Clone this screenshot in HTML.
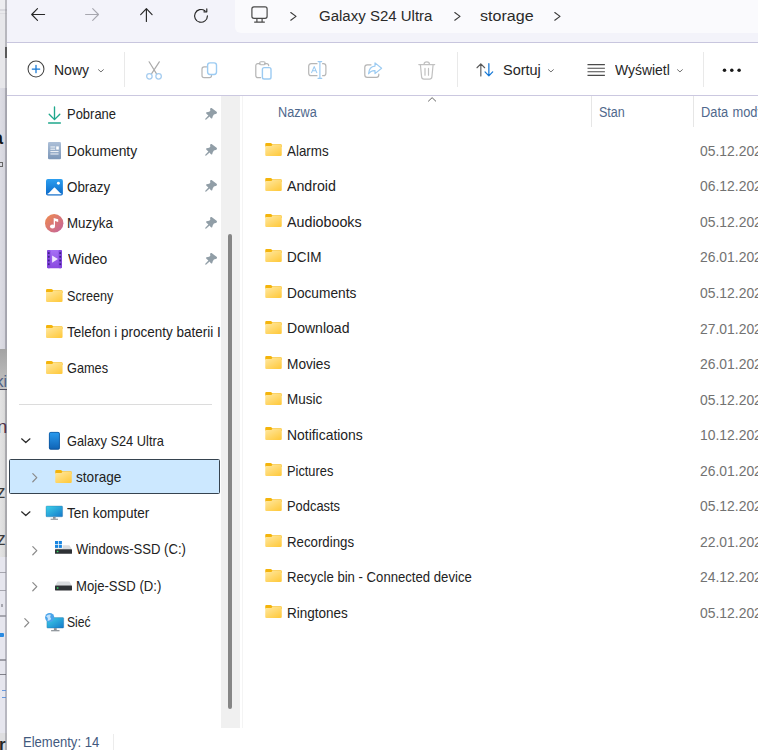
<!DOCTYPE html>
<html lang="pl"><head><meta charset="utf-8"><title>storage</title>
<style>
html,body{margin:0;padding:0}
body{width:758px;height:750px;overflow:hidden;background:#fff;position:relative;font-family:"Liberation Sans",sans-serif}
.ic{position:absolute;overflow:visible;display:block}
.t{position:absolute;white-space:nowrap;line-height:1;transform-origin:0 0;display:block}
.strip{position:absolute;left:0;top:0;width:6.6px;height:750px;overflow:hidden;background:#e6e6e9}
.strip i{position:absolute;left:0;width:6.6px;display:block}
.strip b{position:absolute;display:block}
.strip u{position:absolute;display:block;text-decoration:none;line-height:1;white-space:nowrap}
.strip .edge{left:4.8px;width:1.8px;background:rgba(112,112,122,.4)}
.topbar{position:absolute;left:6.6px;top:0;width:752px;height:42px;background:#f3f3fa}
.topbar>*,.toolbar>*,.sidebar>*,.list>*,.row>*,.status>*{margin-left:-6.6px}
.addr{position:absolute;left:235.2px;top:-6px;width:540px;height:39.2px;border-radius:6px;background:#fafafd}
.toolbar{position:absolute;left:6.6px;top:41.8px;width:752px;height:53.9px;background:#fff;border-top:1.4px solid #c8c6de;border-bottom:1.5px solid #cbc8e0;box-sizing:border-box}
.toolbar>*{margin-top:-43.2px}
.vsep{position:absolute;top:52.5px;width:1px;height:34.5px;background:#e9e9e9;display:block}
.sidebar{position:absolute;left:6.6px;top:95.6px;width:233.4px;height:632.4px;background:#fff}
.sidebar>*{margin-top:-95.6px}
.hsep{position:absolute;height:1.1px;background:#dcdcdc;display:block}
.sel{position:absolute;left:9.1px;top:459.2px;width:210.7px;height:35.3px;box-sizing:border-box;background:#cce8ff;border:1.2px solid #36434f;border-radius:1.5px}
.track{position:absolute;left:221.1px;top:95.6px;width:18.9px;height:632.4px;background:#f0f0f0}
.thumb{position:absolute;left:7.3px;top:138.6px;width:4px;height:474.4px;border-radius:2px;background:#868686;display:block}
.list{position:absolute;left:240px;top:95.6px;width:518px;height:640px;background:#fff;overflow:hidden}
.list>*,.row>*{margin-left:-240px;margin-top:-95.6px}
.row{position:absolute;left:0;top:0;width:518px;height:0;margin:0 !important}
.panel-line{position:absolute;left:242px;top:95.6px;width:1px;height:632.4px;background:#f4f4f4;display:block}
.colsep{position:absolute;top:95.6px;width:1px;height:31.4px;background:#e6e6e6;display:block}
.status{position:absolute;left:6.6px;top:728px;width:752px;height:22px;background:#fff}
.status>*{margin-top:-728px}
.stsep{position:absolute;left:112.6px;top:734px;width:1px;height:16px;background:#ececec;display:block}
</style></head>
<body>
<svg width="0" height="0" style="position:absolute"><defs>
<linearGradient id="fg" x1="0" y1="0" x2="0.75" y2="1"><stop offset="0" stop-color="#ffe9a4"/><stop offset="1" stop-color="#ffcb42"/></linearGradient>
<linearGradient id="mg" x1="0" y1="0" x2="1" y2="1"><stop offset="0" stop-color="#f08c4c"/><stop offset="1" stop-color="#c2629f"/></linearGradient>
<linearGradient id="pg" x1="0" y1="0" x2="0" y2="1"><stop offset="0" stop-color="#2a9cf0"/><stop offset="1" stop-color="#0f62b4"/></linearGradient>
<linearGradient id="dg" x1="0" y1="0" x2="0" y2="1"><stop offset="0" stop-color="#adc0d8"/><stop offset="1" stop-color="#7b96b8"/></linearGradient>
<linearGradient id="og" x1="0" y1="0" x2="0" y2="1"><stop offset="0" stop-color="#2c9ff0"/><stop offset="1" stop-color="#0a68c8"/></linearGradient>
<linearGradient id="sg" x1="0" y1="0" x2="1" y2="1"><stop offset="0" stop-color="#3fd2ea"/><stop offset="1" stop-color="#1478c9"/></linearGradient>
<linearGradient id="vg" x1="0" y1="0" x2="0" y2="1"><stop offset="0" stop-color="#a670f5"/><stop offset="1" stop-color="#8a4ae0"/></linearGradient>
</defs></svg>
<div class="strip"><i style="top:0;height:9px;background:#ededf0"></i><i style="top:9px;height:1.5px;background:#d9d9de"></i><i style="top:10.5px;height:2.5px;background:#e9e9ec"></i><i style="top:13px;height:1px;background:#dcdce0"></i><i style="top:14px;height:74px;background:#e7e7ea"></i><i style="top:88px;height:261px;background:linear-gradient(90deg,#dddde4 0,#d6d6de 60%,#c4c4cc 100%)"></i><i style="top:349px;height:40.6px;background:linear-gradient(#a3a3a3,#c4c4c4)"></i><i style="top:389.6px;height:167px;background:linear-gradient(90deg,#e3e3e3 0,#dcdcdc 55%,#c8c8c8 100%)"></i><i style="top:556.6px;height:176px;background:#e6e6ee"></i><i style="top:732.6px;height:18px;background:#dedee0"></i><i class="edge" style="top:0;height:349px"></i><i class="edge" style="top:389.6px;height:361px"></i><b style="left:4.9px;top:47.3px;width:1.8px;height:10.8px;background:#5a5a5a"></b><u style="right:3.6px;top:128.3px;font-size:19px;font-weight:bold;color:#151515">a</u><b style="left:-2px;top:162px;width:4.6px;height:4.8px;box-sizing:border-box;border:1px solid #666"></b><u style="right:-0.4px;top:374.3px;font-size:16px;color:#4f5f84">ki</u><b style="left:0;top:388.6px;width:6.6px;height:1.1px;background:#4e4e5e"></b><u style="right:-0.6px;top:418.4px;font-size:18.5px;color:#4a3048">n</u><u style="right:1.2px;top:483px;font-size:18px;color:#3c3c3c">z</u><u style="right:0.8px;top:529.6px;font-size:18px;color:#3c3c3c">z</u><b style="left:0;top:571.5px;width:6px;height:1.6px;background:#8a8a94;opacity:.7"></b><b style="left:0;top:589.5px;width:6px;height:1.6px;background:#8a8a94;opacity:.7"></b><b style="left:0.6px;top:603.5px;width:2.2px;height:3.6px;background:#8a8a94;opacity:.7"></b><b style="left:0;top:615px;width:6px;height:1.5px;background:#8a8a94;opacity:.7"></b><b style="left:0;top:633px;width:4px;height:4px;background:#2b8be2;border-radius:0 1px 1px 0"></b><b style="left:0;top:659px;width:6px;height:1.5px;background:#7e7e88;opacity:.7"></b><b style="left:0;top:673.5px;width:6px;height:1.6px;background:#55555f;opacity:.7"></b><b style="left:2px;top:689.5px;width:4px;height:1.4px;background:#4a86d8;opacity:.8"></b><b style="left:2px;top:696.5px;width:4px;height:1.4px;background:#4a86d8;opacity:.8"></b><u style="right:1px;top:735.5px;font-size:17px;font-weight:bold;color:#262626">r</u></div>
<div class="topbar"><div class="addr"></div>
<svg class="ic" style="left:31px;top:8.1px" width="14.2" height="13" viewBox="0 0 14.2 13" ><path d="M13.6 6.5H0.9M6.5 0.7L0.7 6.5L6.5 12.3" fill="none" stroke-linecap="round" stroke-linejoin="round" stroke="#262626" stroke-width="1.15"/></svg>
<svg class="ic" style="left:85.2px;top:8.1px" width="14.2" height="13" viewBox="0 0 14.2 13" ><path d="M0.6 6.5H13.3M7.7 0.7L13.5 6.5L7.7 12.3" fill="none" stroke-linecap="round" stroke-linejoin="round" stroke="#a7a7af" stroke-width="1.15"/></svg>
<svg class="ic" style="left:140px;top:7.8px" width="12.8" height="14" viewBox="0 0 12.8 14" ><path d="M6.4 13.4V0.9M0.7 6.6L6.4 0.7L12.1 6.6" fill="none" stroke-linecap="round" stroke-linejoin="round" stroke="#262626" stroke-width="1.15"/></svg>
<svg class="ic" style="left:193px;top:7.5px" width="16" height="16" viewBox="0 0 16 16" ><path d="M14.4 7.9A6.4 6.4 0 1 1 11.9 2.8" fill="none" stroke-linecap="round" stroke-linejoin="round" stroke="#262626" stroke-width="1.15"/><path d="M9.7 3.2H12.6V0.3" fill="none" stroke-linecap="round" stroke-linejoin="round" stroke="#262626" stroke-width="1.15" transform="translate(1.2,0.6)"/></svg>
<svg class="ic" style="left:251px;top:6px" width="17" height="17" viewBox="0 0 17 17" ><rect x="0.9" y="0.9" width="15.2" height="11.4" rx="2" fill="none" stroke-linecap="round" stroke-linejoin="round" stroke="#4a4a4a" stroke-width="1.2"/><path d="M5.9 12.5V15.9M11.1 12.5V15.9M3.6 16.1H13.4" fill="none" stroke-linecap="round" stroke-linejoin="round" stroke="#4a4a4a" stroke-width="1.2"/></svg>
<svg class="ic" style="left:290.3px;top:11.8px" width="6.8" height="8.8" viewBox="0 0 6.8 8.8" ><path d="M0.77 0.57L6.02 4.40L0.77 8.23" fill="none" stroke="#3a3a3a" stroke-width="1.15" stroke-linecap="round" stroke-linejoin="round"/></svg>
<span class="t" style="left:319.00px;top:7.76px;font-size:15.4px;color:#2a2a2a;transform:scaleX(0.9751)">Galaxy S24 Ultra</span>
<svg class="ic" style="left:453.8px;top:11.8px" width="6.8" height="8.8" viewBox="0 0 6.8 8.8" ><path d="M0.77 0.57L6.02 4.40L0.77 8.23" fill="none" stroke="#3a3a3a" stroke-width="1.15" stroke-linecap="round" stroke-linejoin="round"/></svg>
<span class="t" style="left:480.05px;top:7.76px;font-size:15.4px;color:#2a2a2a;transform:scaleX(1.0435)">storage</span>
<svg class="ic" style="left:554.4px;top:11.8px" width="6.8" height="8.8" viewBox="0 0 6.8 8.8" ><path d="M0.77 0.57L6.02 4.40L0.77 8.23" fill="none" stroke="#3a3a3a" stroke-width="1.15" stroke-linecap="round" stroke-linejoin="round"/></svg>
</div>
<div class="toolbar">
<svg class="ic" style="left:26.55px;top:60.8px" width="18" height="18" viewBox="0 0 18 18" ><circle cx="9" cy="9" r="7.95" fill="none" stroke-linecap="round" stroke-linejoin="round" stroke="#444" stroke-width="1.05"/><path d="M9 5.3V12.7M5.3 9H12.7" fill="none" stroke-linecap="round" stroke-linejoin="round" stroke="#1377d6" stroke-width="1.25"/></svg>
<span class="t" style="left:54.41px;top:63.65px;font-size:14.0px;color:#262626;transform:scaleX(0.9996)">Nowy</span>
<svg class="ic" style="left:98px;top:69.4px" width="5.9" height="3.6" viewBox="0 0 5.9 3.6" ><path d="M0.50 0.70L2.95 2.90L5.40 0.70" fill="none" stroke="#6e6e6e" stroke-width="1" stroke-linecap="round" stroke-linejoin="round"/></svg>
<i class="vsep" style="left:123.7px"></i>
<svg class="ic" style="left:145px;top:61px" width="18" height="19" viewBox="0 0 18 19" ><path d="M4.1 0.8L11.7 13.1M14.3 0.8L6.3 13.1" fill="none" stroke-linecap="round" stroke-linejoin="round" stroke="#ababab" stroke-width="1.2"/><circle cx="4.4" cy="15.3" r="2.75" fill="none" stroke-linecap="round" stroke-linejoin="round" stroke="#a6cdf0" stroke-width="1.3"/><circle cx="13.6" cy="15.3" r="2.75" fill="none" stroke-linecap="round" stroke-linejoin="round" stroke="#a6cdf0" stroke-width="1.3"/></svg>
<svg class="ic" style="left:200.5px;top:62px" width="17" height="17" viewBox="0 0 17 17" ><path d="M5.6 4.8H3.1Q1 4.8 1 6.9V13.6Q1 15.7 3.1 15.7H8.4Q10.5 15.7 10.5 13.6V13.3" fill="none" stroke-linecap="round" stroke-linejoin="round" stroke="#b4b4b4" stroke-width="1.2"/><rect x="6.6" y="0.9" width="8.9" height="11.6" rx="2.4" fill="none" stroke-linecap="round" stroke-linejoin="round" stroke="#9ccbf2" stroke-width="1.4"/></svg>
<svg class="ic" style="left:255px;top:61px" width="17" height="19" viewBox="0 0 17 19" ><path d="M5 2.6H3Q0.8 2.6 0.8 4.8V14.4Q0.8 16.6 3 16.6H5.6M9.6 2.6H11.6Q13.6 2.6 13.7 4.6" fill="none" stroke-linecap="round" stroke-linejoin="round" stroke="#b4b4b4" stroke-width="1.2"/><rect x="4.6" y="0.8" width="5.6" height="3" rx="1.4" fill="none" stroke-linecap="round" stroke-linejoin="round" stroke="#b4b4b4" stroke-width="1.1"/><rect x="7.4" y="6.6" width="8.6" height="11.4" rx="1.8" fill="none" stroke-linecap="round" stroke-linejoin="round" stroke="#9ccbf2" stroke-width="1.4"/></svg>
<svg class="ic" style="left:308.4px;top:61.2px" width="18.6" height="18" viewBox="0 0 18.6 18" ><path d="M9 2.7H3.2Q0.7 2.7 0.7 5.2V12.2Q0.7 14.7 3.2 14.7H9M14.6 2.7H15.4Q17.9 2.7 17.9 5.2V12.2Q17.9 14.7 15.4 14.7H14.6" fill="none" stroke-linecap="round" stroke-linejoin="round" stroke="#b6b6b6" stroke-width="1.2"/><path d="M3.6 11.6L6.2 5.6L8.8 11.6M4.5 9.7H7.9" fill="none" stroke-linecap="round" stroke-linejoin="round" stroke="#9ccbf2" stroke-width="1.1"/><path d="M11.9 0.7V17.3M10.1 0.6H13.7M10.1 17.4H13.7" fill="none" stroke-linecap="round" stroke-linejoin="round" stroke="#9ccbf2" stroke-width="1.2"/></svg>
<svg class="ic" style="left:363.5px;top:62px" width="18.5" height="17" viewBox="0 0 18.5 17" ><path d="M7 2.8H3.2Q0.8 2.8 0.8 5.2V13Q0.8 15.4 3.2 15.4H12.4Q14.8 15.4 14.8 13V12.2" fill="none" stroke-linecap="round" stroke-linejoin="round" stroke="#b4b4b4" stroke-width="1.2"/><path d="M11 0.9L17.6 6.2L11 11.6V8.6Q6.6 8.4 4.6 11.8Q5 4.6 11 4.1Z" fill="none" stroke-linecap="round" stroke-linejoin="round" stroke="#9ccbf2" stroke-width="1.2"/></svg>
<svg class="ic" style="left:418px;top:61px" width="17.5" height="19" viewBox="0 0 17.5 19" ><path d="M0.8 3.6H16.7M6 3.4Q6 0.8 8.75 0.8Q11.5 0.8 11.5 3.4M2.4 3.8L3.6 15.9Q3.8 18.1 6 18.1H11.5Q13.7 18.1 13.9 15.9L15.1 3.8M7 7.4V14.2M10.5 7.4V14.2" fill="none" stroke-linecap="round" stroke-linejoin="round" stroke="#c1c1c1" stroke-width="1.2"/></svg>
<i class="vsep" style="left:456.6px"></i>
<svg class="ic" style="left:475.5px;top:63.3px" width="18.8" height="13.7" viewBox="0 0 20 15" ><path d="M5 14.2V1M0.8 5.2L5 0.9L9.2 5.2" fill="none" stroke-linecap="round" stroke-linejoin="round" stroke="#5a5a5a" stroke-width="1.25"/><path d="M13.8 0.8V14M9.6 9.8L13.8 14.1L18 9.8" fill="none" stroke-linecap="round" stroke-linejoin="round" stroke="#1377d6" stroke-width="1.35"/></svg>
<span class="t" style="left:503.05px;top:63.65px;font-size:14.0px;color:#262626;transform:scaleX(1.0337)">Sortuj</span>
<svg class="ic" style="left:547.9px;top:69.4px" width="5.9" height="3.6" viewBox="0 0 5.9 3.6" ><path d="M0.50 0.70L2.95 2.90L5.40 0.70" fill="none" stroke="#6e6e6e" stroke-width="1" stroke-linecap="round" stroke-linejoin="round"/></svg>
<svg class="ic" style="left:587px;top:64px" width="18.4" height="12" viewBox="0 0 18.4 12" ><path d="M0.5 0.6H17.9M0.5 4.2H17.9M0.5 7.8H17.9M0.5 11.4H17.9" stroke="#4a4a4a" stroke-width="1.05"/></svg>
<span class="t" style="left:614.70px;top:63.65px;font-size:14.0px;color:#262626;transform:scaleX(0.9949)">Wyświetl</span>
<svg class="ic" style="left:677px;top:69.4px" width="5.9" height="3.6" viewBox="0 0 5.9 3.6" ><path d="M0.50 0.70L2.95 2.90L5.40 0.70" fill="none" stroke="#6e6e6e" stroke-width="1" stroke-linecap="round" stroke-linejoin="round"/></svg>
<i class="vsep" style="left:703.1px"></i>
<svg class="ic" style="left:722px;top:68.5px" width="19.5" height="4.5" viewBox="0 0 19.5 4.5" ><circle cx="2.5" cy="2.2" r="1.75" fill="#1a1a1a"/><circle cx="9.8" cy="2.2" r="1.75" fill="#1a1a1a"/><circle cx="17.1" cy="2.2" r="1.75" fill="#1a1a1a"/></svg>
</div>
<div class="sidebar">
<svg class="ic" style="left:48px;top:105.5px" width="13" height="18" viewBox="0 0 13 18" ><path d="M6.5 1V13.4M1.2 8.2L6.5 13.6L11.8 8.2" fill="none" stroke-linecap="round" stroke-linejoin="round" stroke="#1fa88c" stroke-width="1.35"/><path d="M0.6 17H12.4" fill="none" stroke-linecap="round" stroke-linejoin="round" stroke="#1fa88c" stroke-width="1.35"/></svg>
<span class="t" style="left:67.49px;top:107.26px;font-size:14.4px;color:#222222;transform:scaleX(0.9007)">Pobrane</span>
<svg class="ic" style="left:204.9px;top:107.9px" width="12" height="12" viewBox="0 0 12 12" ><path d="M6.6 0.1L11.6 3.8Q12.6 5 11.4 5.8L8.9 6.5L7.8 8.2L7.2 10.2Q6.4 10.9 5.6 10.1L4.6 8.4L1.3 11.5Q0.3 12 0.1 11L3.4 7.4L1.4 5.7Q0.6 4.8 1.6 4.3L4.2 3.8L5.3 2.8L5.1 1.1Q5.3 -0.3 6.6 0.1Z" fill="#919ea7"/></svg>
<svg class="ic" style="left:48px;top:142px" width="13" height="17.3" viewBox="0 0 13 17.3" ><rect x="0" y="0" width="13" height="17.3" rx="1.3" fill="url(#dg)"/><path d="M2.4 5H7.2M2.4 7.2H7.2M2.4 9.6H10.6M2.4 12H10.6" stroke="#fff" stroke-width="0.9"/><rect x="8.2" y="4.4" width="2.6" height="3.2" fill="#fff"/></svg>
<span class="t" style="left:67.32px;top:143.51px;font-size:14.4px;color:#222222;transform:scaleX(0.9637)">Dokumenty</span>
<svg class="ic" style="left:204.9px;top:144.2px" width="12" height="12" viewBox="0 0 12 12" ><path d="M6.6 0.1L11.6 3.8Q12.6 5 11.4 5.8L8.9 6.5L7.8 8.2L7.2 10.2Q6.4 10.9 5.6 10.1L4.6 8.4L1.3 11.5Q0.3 12 0.1 11L3.4 7.4L1.4 5.7Q0.6 4.8 1.6 4.3L4.2 3.8L5.3 2.8L5.1 1.1Q5.3 -0.3 6.6 0.1Z" fill="#919ea7"/></svg>
<svg class="ic" style="left:46.1px;top:178.5px" width="16.9" height="16.4" viewBox="0 0 16.9 16.4" ><rect x="0" y="0" width="16.9" height="16.4" rx="1.9" fill="url(#og)"/><path d="M1.9 14.9L8.2 8.6Q8.5 8.3 8.8 8.6L15.1 14.9Z" fill="#fff"/><path d="M1.9 14.9H15.1" stroke="#fff" stroke-width="0.8" stroke-linecap="round"/><circle cx="12.4" cy="4.2" r="1.45" fill="#fff"/></svg>
<span class="t" style="left:67.17px;top:179.76px;font-size:14.4px;color:#222222;transform:scaleX(0.9292)">Obrazy</span>
<svg class="ic" style="left:204.9px;top:180.4px" width="12" height="12" viewBox="0 0 12 12" ><path d="M6.6 0.1L11.6 3.8Q12.6 5 11.4 5.8L8.9 6.5L7.8 8.2L7.2 10.2Q6.4 10.9 5.6 10.1L4.6 8.4L1.3 11.5Q0.3 12 0.1 11L3.4 7.4L1.4 5.7Q0.6 4.8 1.6 4.3L4.2 3.8L5.3 2.8L5.1 1.1Q5.3 -0.3 6.6 0.1Z" fill="#919ea7"/></svg>
<svg class="ic" style="left:45.3px;top:213.7px" width="18.4" height="18.4" viewBox="0 0 18.4 18.4" ><circle cx="9.2" cy="9.2" r="9.2" fill="url(#mg)"/><ellipse cx="7.5" cy="12.5" rx="2.5" ry="2.1" fill="#fff"/><path d="M8.7 12.5V4L13.2 5.3V8L10 7.1V12.5Z" fill="#fff"/></svg>
<span class="t" style="left:67.36px;top:216.01px;font-size:14.4px;color:#222222;transform:scaleX(0.9243)">Muzyka</span>
<svg class="ic" style="left:204.9px;top:216.7px" width="12" height="12" viewBox="0 0 12 12" ><path d="M6.6 0.1L11.6 3.8Q12.6 5 11.4 5.8L8.9 6.5L7.8 8.2L7.2 10.2Q6.4 10.9 5.6 10.1L4.6 8.4L1.3 11.5Q0.3 12 0.1 11L3.4 7.4L1.4 5.7Q0.6 4.8 1.6 4.3L4.2 3.8L5.3 2.8L5.1 1.1Q5.3 -0.3 6.6 0.1Z" fill="#919ea7"/></svg>
<svg class="ic" style="left:47px;top:250.2px" width="15" height="18.2" viewBox="0 0 15 18.2" ><rect x="0" y="0" width="15" height="18.2" rx="1.5" fill="url(#vg)"/><rect x="0" y="0" width="3.4" height="18.2" rx="1.2" fill="#8547de"/><rect x="11.6" y="0" width="3.4" height="18.2" rx="1.2" fill="#8547de"/><g fill="#3d2286"><rect x="0.9" y="2.2" width="1.7" height="1.8"/><rect x="0.9" y="5.9" width="1.7" height="1.8"/><rect x="0.9" y="9.6" width="1.7" height="1.8"/><rect x="0.9" y="13.3" width="1.7" height="1.8"/><rect x="12.4" y="2.2" width="1.7" height="1.8"/><rect x="12.4" y="5.9" width="1.7" height="1.8"/><rect x="12.4" y="9.6" width="1.7" height="1.8"/><rect x="12.4" y="13.3" width="1.7" height="1.8"/></g><path d="M5.1 5.5L10.9 9.1L5.1 12.7Z" fill="#f1e6ff"/></svg>
<span class="t" style="left:67.70px;top:252.26px;font-size:14.4px;color:#222222;transform:scaleX(0.9644)">Wideo</span>
<svg class="ic" style="left:204.9px;top:252.9px" width="12" height="12" viewBox="0 0 12 12" ><path d="M6.6 0.1L11.6 3.8Q12.6 5 11.4 5.8L8.9 6.5L7.8 8.2L7.2 10.2Q6.4 10.9 5.6 10.1L4.6 8.4L1.3 11.5Q0.3 12 0.1 11L3.4 7.4L1.4 5.7Q0.6 4.8 1.6 4.3L4.2 3.8L5.3 2.8L5.1 1.1Q5.3 -0.3 6.6 0.1Z" fill="#919ea7"/></svg>
<svg class="ic" style="left:46.2px;top:288.8px" width="16.6" height="13" viewBox="0 0 16.5 13" ><path d="M0 1.1Q0 0 1.1 0H5.4Q6 0 6.4 0.5L7 1.3H15.4Q16.5 1.3 16.5 2.4V4H0Z" fill="#f4b40b"/><path d="M0 3H5.6Q6.2 3 6.6 2.5L7.4 1.5H15.4Q16.5 1.5 16.5 2.6V11.9Q16.5 13 15.4 13H1.1Q0 13 0 11.9Z" fill="url(#fg)"/></svg>
<span class="t" style="left:67.01px;top:288.51px;font-size:14.4px;color:#222222;transform:scaleX(0.8764)">Screeny</span>
<svg class="ic" style="left:46.2px;top:325px" width="16.6" height="13" viewBox="0 0 16.5 13" ><path d="M0 1.1Q0 0 1.1 0H5.4Q6 0 6.4 0.5L7 1.3H15.4Q16.5 1.3 16.5 2.4V4H0Z" fill="#f4b40b"/><path d="M0 3H5.6Q6.2 3 6.6 2.5L7.4 1.5H15.4Q16.5 1.5 16.5 2.6V11.9Q16.5 13 15.4 13H1.1Q0 13 0 11.9Z" fill="url(#fg)"/></svg>
<span class="t" style="left:67.29px;top:324.76px;font-size:14.4px;color:#222222;transform:scaleX(0.9375)">Telefon i procenty baterii I</span>
<svg class="ic" style="left:46.2px;top:361.3px" width="16.6" height="13" viewBox="0 0 16.5 13" ><path d="M0 1.1Q0 0 1.1 0H5.4Q6 0 6.4 0.5L7 1.3H15.4Q16.5 1.3 16.5 2.4V4H0Z" fill="#f4b40b"/><path d="M0 3H5.6Q6.2 3 6.6 2.5L7.4 1.5H15.4Q16.5 1.5 16.5 2.6V11.9Q16.5 13 15.4 13H1.1Q0 13 0 11.9Z" fill="url(#fg)"/></svg>
<span class="t" style="left:67.40px;top:361.01px;font-size:14.4px;color:#222222;transform:scaleX(0.8854)">Games</span>
<i class="hsep" style="left:18.5px;top:404px;width:193.5px"></i>
<svg class="ic" style="left:21.3px;top:438.2px" width="9.6" height="5.4" viewBox="0 0 9.6 5.4" ><path d="M0.62 0.82L4.80 4.58L8.97 0.82" fill="none" stroke="#2a2a2a" stroke-width="1.25" stroke-linecap="round" stroke-linejoin="round"/></svg>
<svg class="ic" style="left:49.2px;top:432.2px" width="10.8" height="17.6" viewBox="0 0 10.8 17.6" ><rect x="0" y="0" width="10.8" height="17.6" rx="1.7" fill="url(#pg)"/><rect x="0.35" y="0.35" width="10.1" height="16.9" rx="1.5" fill="none" stroke="#0d4f94" stroke-width="0.7"/></svg>
<span class="t" style="left:66.90px;top:433.51px;font-size:14.4px;color:#222222;transform:scaleX(0.8904)">Galaxy S24 Ultra</span>
<div class="sel"></div>
<svg class="ic" style="left:32.3px;top:473px" width="5.6" height="9.4" viewBox="0 0 5.6 9.4" ><path d="M0.80 0.60L4.80 4.70L0.80 8.80" fill="none" stroke="#8a8a8a" stroke-width="1.2" stroke-linecap="round" stroke-linejoin="round"/></svg>
<svg class="ic" style="left:55px;top:470.3px" width="17" height="13" viewBox="0 0 16.5 13" ><path d="M0 1.1Q0 0 1.1 0H5.4Q6 0 6.4 0.5L7 1.3H15.4Q16.5 1.3 16.5 2.4V4H0Z" fill="#f4b40b"/><path d="M0 3H5.6Q6.2 3 6.6 2.5L7.4 1.5H15.4Q16.5 1.5 16.5 2.6V11.9Q16.5 13 15.4 13H1.1Q0 13 0 11.9Z" fill="url(#fg)"/></svg>
<span class="t" style="left:76.39px;top:469.76px;font-size:14.4px;color:#222222;transform:scaleX(0.9445)">storage</span>
<svg class="ic" style="left:21.3px;top:511px" width="9.6" height="5.4" viewBox="0 0 9.6 5.4" ><path d="M0.62 0.82L4.80 4.58L8.97 0.82" fill="none" stroke="#2a2a2a" stroke-width="1.25" stroke-linecap="round" stroke-linejoin="round"/></svg>
<svg class="ic" style="left:46.2px;top:506.3px" width="16.6" height="14" viewBox="0 0 16.6 14" ><rect x="0" y="0" width="16.6" height="10.8" rx="0.9" fill="url(#sg)"/><rect x="0" y="0" width="16.6" height="10.8" rx="0.9" fill="none" stroke="#1a5f96" stroke-width="0.6" opacity=".5"/><rect x="7" y="10.8" width="2.6" height="2" fill="#8a9096"/><rect x="4.6" y="12.7" width="7.4" height="1.1" fill="#8a9096"/></svg>
<span class="t" style="left:67.29px;top:506.01px;font-size:14.4px;color:#222222;transform:scaleX(0.9442)">Ten komputer</span>
<svg class="ic" style="left:32.3px;top:545.6px" width="5.6" height="9.4" viewBox="0 0 5.6 9.4" ><path d="M0.80 0.60L4.80 4.70L0.80 8.80" fill="none" stroke="#8a8a8a" stroke-width="1.2" stroke-linecap="round" stroke-linejoin="round"/></svg>
<svg class="ic" style="left:55px;top:541px" width="17" height="13" viewBox="0 0 17 13" ><g fill="#1a86e0"><rect x="0" y="0" width="3.1" height="3.1"/><rect x="3.8" y="0" width="3.1" height="3.1"/><rect x="0" y="3.8" width="3.1" height="3.1"/><rect x="3.8" y="3.8" width="3.1" height="3.1"/></g><path d="M7.6 4.2H14.4L17 8.4H0V7.4H7.6Z" fill="#d9dcdf"/><rect x="0" y="8.2" width="17" height="4.6" rx="0.6" fill="#2e3135"/><rect x="1.8" y="9.8" width="1.6" height="1.4" fill="#35e06a"/></svg>
<span class="t" style="left:75.90px;top:542.26px;font-size:14.4px;color:#222222;transform:scaleX(0.9103)">Windows-SSD (C:)</span>
<svg class="ic" style="left:32.3px;top:581.8px" width="5.6" height="9.4" viewBox="0 0 5.6 9.4" ><path d="M0.80 0.60L4.80 4.70L0.80 8.80" fill="none" stroke="#8a8a8a" stroke-width="1.2" stroke-linecap="round" stroke-linejoin="round"/></svg>
<svg class="ic" style="left:55px;top:581px" width="17" height="9.6" viewBox="0 0 17 9.6" ><path d="M2.6 0.6H14.4L17 4.8H0Z" fill="#d9dcdf"/><rect x="0" y="4.6" width="17" height="4.8" rx="0.6" fill="#2e3135"/><rect x="1.8" y="6.3" width="1.6" height="1.4" fill="#35e06a"/></svg>
<span class="t" style="left:76.27px;top:578.51px;font-size:14.4px;color:#222222;transform:scaleX(0.9113)">Moje-SSD (D:)</span>
<svg class="ic" style="left:23.9px;top:618px" width="5.6" height="9.4" viewBox="0 0 5.6 9.4" ><path d="M0.80 0.60L4.80 4.70L0.80 8.80" fill="none" stroke="#8a8a8a" stroke-width="1.2" stroke-linecap="round" stroke-linejoin="round"/></svg>
<svg class="ic" style="left:45px;top:613px" width="19" height="18.6" viewBox="0 0 19 18.6" ><rect x="1.9" y="4.6" width="16.8" height="10.5" rx="0.8" fill="url(#sg)"/><rect x="1.9" y="4.6" width="16.8" height="10.5" rx="0.8" fill="none" stroke="#155c94" stroke-width="0.6" opacity=".5"/><rect x="8.9" y="15.1" width="2.8" height="2.2" fill="#8a9096"/><rect x="6.1" y="17.1" width="8.4" height="1.2" fill="#8a9096"/><circle cx="4.7" cy="4.6" r="4.6" fill="#4aa4ea"/><path d="M1 3.2Q3.2 0.8 5.8 1.8Q4.4 4 6.2 6Q4.4 8.4 2.4 7.6Q3.8 5.2 1 3.2Z" fill="#d6ecff" opacity=".85"/></svg>
<span class="t" style="left:67.12px;top:614.76px;font-size:14.4px;color:#222222;transform:scaleX(0.8450)">Sieć</span>
<div class="track"><i class="thumb"></i></div>
</div>
<div class="list">
<i class="panel-line"></i>
<svg class="ic" style="left:427.5px;top:96.8px" width="8.2" height="4.8" viewBox="0 0 8.2 4.8" ><path d="M0.47 4.12L4.10 0.68L7.72 4.12" fill="none" stroke="#5c5c5c" stroke-width="0.95" stroke-linecap="round" stroke-linejoin="round"/></svg>
<span class="t" style="left:278.31px;top:105.25px;font-size:14.0px;color:#50688c;transform:scaleX(0.9070)">Nazwa</span>
<i class="colsep" style="left:591px"></i>
<span class="t" style="left:598.51px;top:105.25px;font-size:14.0px;color:#50688c;transform:scaleX(0.8957)">Stan</span>
<i class="colsep" style="left:693.3px"></i>
<span class="t" style="left:700.60px;top:105.25px;font-size:14.0px;color:#50688c;transform:scaleX(0.9180)">Data<span style="margin-left:0.8px"> </span>modyfikacji</span>
<div class="row">
<svg class="ic" style="left:265.1px;top:142.86px" width="17" height="13" viewBox="0 0 16.5 13" ><path d="M0 1.1Q0 0 1.1 0H5.4Q6 0 6.4 0.5L7 1.3H15.4Q16.5 1.3 16.5 2.4V4H0Z" fill="#f4b40b"/><path d="M0 3H5.6Q6.2 3 6.6 2.5L7.4 1.5H15.4Q16.5 1.5 16.5 2.6V11.9Q16.5 13 15.4 13H1.1Q0 13 0 11.9Z" fill="url(#fg)"/></svg>
<span class="t" style="left:287.25px;top:143.64px;font-size:14.2px;color:#222222;transform:scaleX(0.9431)">Alarms</span>
<span class="t" style="left:700.30px;top:143.81px;font-size:14.0px;color:#727272;transform:scaleX(0.9930)">05.12.2024 18:02</span>
</div>
<div class="row">
<svg class="ic" style="left:265.1px;top:178.4px" width="17" height="13" viewBox="0 0 16.5 13" ><path d="M0 1.1Q0 0 1.1 0H5.4Q6 0 6.4 0.5L7 1.3H15.4Q16.5 1.3 16.5 2.4V4H0Z" fill="#f4b40b"/><path d="M0 3H5.6Q6.2 3 6.6 2.5L7.4 1.5H15.4Q16.5 1.5 16.5 2.6V11.9Q16.5 13 15.4 13H1.1Q0 13 0 11.9Z" fill="url(#fg)"/></svg>
<span class="t" style="left:287.25px;top:179.18px;font-size:14.2px;color:#222222;transform:scaleX(1.0001)">Android</span>
<span class="t" style="left:700.30px;top:179.35px;font-size:14.0px;color:#727272;transform:scaleX(0.9930)">06.12.2024 09:14</span>
</div>
<div class="row">
<svg class="ic" style="left:265.1px;top:213.94px" width="17" height="13" viewBox="0 0 16.5 13" ><path d="M0 1.1Q0 0 1.1 0H5.4Q6 0 6.4 0.5L7 1.3H15.4Q16.5 1.3 16.5 2.4V4H0Z" fill="#f4b40b"/><path d="M0 3H5.6Q6.2 3 6.6 2.5L7.4 1.5H15.4Q16.5 1.5 16.5 2.6V11.9Q16.5 13 15.4 13H1.1Q0 13 0 11.9Z" fill="url(#fg)"/></svg>
<span class="t" style="left:287.25px;top:214.72px;font-size:14.2px;color:#222222;transform:scaleX(1.0066)">Audiobooks</span>
<span class="t" style="left:700.30px;top:214.89px;font-size:14.0px;color:#727272;transform:scaleX(0.9930)">05.12.2024 18:02</span>
</div>
<div class="row">
<svg class="ic" style="left:265.1px;top:249.48px" width="17" height="13" viewBox="0 0 16.5 13" ><path d="M0 1.1Q0 0 1.1 0H5.4Q6 0 6.4 0.5L7 1.3H15.4Q16.5 1.3 16.5 2.4V4H0Z" fill="#f4b40b"/><path d="M0 3H5.6Q6.2 3 6.6 2.5L7.4 1.5H15.4Q16.5 1.5 16.5 2.6V11.9Q16.5 13 15.4 13H1.1Q0 13 0 11.9Z" fill="url(#fg)"/></svg>
<span class="t" style="left:287.29px;top:250.26px;font-size:14.2px;color:#222222;transform:scaleX(0.9513)">DCIM</span>
<span class="t" style="left:700.30px;top:250.43px;font-size:14.0px;color:#727272;transform:scaleX(0.9930)">26.01.2025 12:40</span>
</div>
<div class="row">
<svg class="ic" style="left:265.1px;top:285.02px" width="17" height="13" viewBox="0 0 16.5 13" ><path d="M0 1.1Q0 0 1.1 0H5.4Q6 0 6.4 0.5L7 1.3H15.4Q16.5 1.3 16.5 2.4V4H0Z" fill="#f4b40b"/><path d="M0 3H5.6Q6.2 3 6.6 2.5L7.4 1.5H15.4Q16.5 1.5 16.5 2.6V11.9Q16.5 13 15.4 13H1.1Q0 13 0 11.9Z" fill="url(#fg)"/></svg>
<span class="t" style="left:287.28px;top:285.80px;font-size:14.2px;color:#222222;transform:scaleX(0.9656)">Documents</span>
<span class="t" style="left:700.30px;top:285.97px;font-size:14.0px;color:#727272;transform:scaleX(0.9930)">05.12.2024 18:02</span>
</div>
<div class="row">
<svg class="ic" style="left:265.1px;top:320.56px" width="17" height="13" viewBox="0 0 16.5 13" ><path d="M0 1.1Q0 0 1.1 0H5.4Q6 0 6.4 0.5L7 1.3H15.4Q16.5 1.3 16.5 2.4V4H0Z" fill="#f4b40b"/><path d="M0 3H5.6Q6.2 3 6.6 2.5L7.4 1.5H15.4Q16.5 1.5 16.5 2.6V11.9Q16.5 13 15.4 13H1.1Q0 13 0 11.9Z" fill="url(#fg)"/></svg>
<span class="t" style="left:287.25px;top:321.34px;font-size:14.2px;color:#222222;transform:scaleX(0.9903)">Download</span>
<span class="t" style="left:700.30px;top:321.51px;font-size:14.0px;color:#727272;transform:scaleX(0.9930)">27.01.2025 08:31</span>
</div>
<div class="row">
<svg class="ic" style="left:265.1px;top:356.1px" width="17" height="13" viewBox="0 0 16.5 13" ><path d="M0 1.1Q0 0 1.1 0H5.4Q6 0 6.4 0.5L7 1.3H15.4Q16.5 1.3 16.5 2.4V4H0Z" fill="#f4b40b"/><path d="M0 3H5.6Q6.2 3 6.6 2.5L7.4 1.5H15.4Q16.5 1.5 16.5 2.6V11.9Q16.5 13 15.4 13H1.1Q0 13 0 11.9Z" fill="url(#fg)"/></svg>
<span class="t" style="left:287.28px;top:356.88px;font-size:14.2px;color:#222222;transform:scaleX(0.9637)">Movies</span>
<span class="t" style="left:700.30px;top:357.05px;font-size:14.0px;color:#727272;transform:scaleX(0.9930)">26.01.2025 12:40</span>
</div>
<div class="row">
<svg class="ic" style="left:265.1px;top:391.64px" width="17" height="13" viewBox="0 0 16.5 13" ><path d="M0 1.1Q0 0 1.1 0H5.4Q6 0 6.4 0.5L7 1.3H15.4Q16.5 1.3 16.5 2.4V4H0Z" fill="#f4b40b"/><path d="M0 3H5.6Q6.2 3 6.6 2.5L7.4 1.5H15.4Q16.5 1.5 16.5 2.6V11.9Q16.5 13 15.4 13H1.1Q0 13 0 11.9Z" fill="url(#fg)"/></svg>
<span class="t" style="left:287.30px;top:392.42px;font-size:14.2px;color:#222222;transform:scaleX(0.9497)">Music</span>
<span class="t" style="left:700.30px;top:392.59px;font-size:14.0px;color:#727272;transform:scaleX(0.9930)">05.12.2024 18:02</span>
</div>
<div class="row">
<svg class="ic" style="left:265.1px;top:427.18px" width="17" height="13" viewBox="0 0 16.5 13" ><path d="M0 1.1Q0 0 1.1 0H5.4Q6 0 6.4 0.5L7 1.3H15.4Q16.5 1.3 16.5 2.4V4H0Z" fill="#f4b40b"/><path d="M0 3H5.6Q6.2 3 6.6 2.5L7.4 1.5H15.4Q16.5 1.5 16.5 2.6V11.9Q16.5 13 15.4 13H1.1Q0 13 0 11.9Z" fill="url(#fg)"/></svg>
<span class="t" style="left:287.26px;top:427.96px;font-size:14.2px;color:#222222;transform:scaleX(0.9810)">Notifications</span>
<span class="t" style="left:700.30px;top:428.13px;font-size:14.0px;color:#727272;transform:scaleX(0.9930)">10.12.2024 21:07</span>
</div>
<div class="row">
<svg class="ic" style="left:265.1px;top:462.72px" width="17" height="13" viewBox="0 0 16.5 13" ><path d="M0 1.1Q0 0 1.1 0H5.4Q6 0 6.4 0.5L7 1.3H15.4Q16.5 1.3 16.5 2.4V4H0Z" fill="#f4b40b"/><path d="M0 3H5.6Q6.2 3 6.6 2.5L7.4 1.5H15.4Q16.5 1.5 16.5 2.6V11.9Q16.5 13 15.4 13H1.1Q0 13 0 11.9Z" fill="url(#fg)"/></svg>
<span class="t" style="left:287.35px;top:463.50px;font-size:14.2px;color:#222222;transform:scaleX(0.9037)">Pictures</span>
<span class="t" style="left:700.30px;top:463.67px;font-size:14.0px;color:#727272;transform:scaleX(0.9930)">26.01.2025 12:41</span>
</div>
<div class="row">
<svg class="ic" style="left:265.1px;top:498.26px" width="17" height="13" viewBox="0 0 16.5 13" ><path d="M0 1.1Q0 0 1.1 0H5.4Q6 0 6.4 0.5L7 1.3H15.4Q16.5 1.3 16.5 2.4V4H0Z" fill="#f4b40b"/><path d="M0 3H5.6Q6.2 3 6.6 2.5L7.4 1.5H15.4Q16.5 1.5 16.5 2.6V11.9Q16.5 13 15.4 13H1.1Q0 13 0 11.9Z" fill="url(#fg)"/></svg>
<span class="t" style="left:287.34px;top:499.04px;font-size:14.2px;color:#222222;transform:scaleX(0.9084)">Podcasts</span>
<span class="t" style="left:700.30px;top:499.21px;font-size:14.0px;color:#727272;transform:scaleX(0.9930)">05.12.2024 18:02</span>
</div>
<div class="row">
<svg class="ic" style="left:265.1px;top:533.8px" width="17" height="13" viewBox="0 0 16.5 13" ><path d="M0 1.1Q0 0 1.1 0H5.4Q6 0 6.4 0.5L7 1.3H15.4Q16.5 1.3 16.5 2.4V4H0Z" fill="#f4b40b"/><path d="M0 3H5.6Q6.2 3 6.6 2.5L7.4 1.5H15.4Q16.5 1.5 16.5 2.6V11.9Q16.5 13 15.4 13H1.1Q0 13 0 11.9Z" fill="url(#fg)"/></svg>
<span class="t" style="left:287.31px;top:534.58px;font-size:14.2px;color:#222222;transform:scaleX(0.9342)">Recordings</span>
<span class="t" style="left:700.30px;top:534.75px;font-size:14.0px;color:#727272;transform:scaleX(0.9930)">22.01.2025 16:55</span>
</div>
<div class="row">
<svg class="ic" style="left:265.1px;top:569.34px" width="17" height="13" viewBox="0 0 16.5 13" ><path d="M0 1.1Q0 0 1.1 0H5.4Q6 0 6.4 0.5L7 1.3H15.4Q16.5 1.3 16.5 2.4V4H0Z" fill="#f4b40b"/><path d="M0 3H5.6Q6.2 3 6.6 2.5L7.4 1.5H15.4Q16.5 1.5 16.5 2.6V11.9Q16.5 13 15.4 13H1.1Q0 13 0 11.9Z" fill="url(#fg)"/></svg>
<span class="t" style="left:287.32px;top:570.12px;font-size:14.2px;color:#222222;transform:scaleX(0.9260)">Recycle bin - Connected device</span>
<span class="t" style="left:700.30px;top:570.29px;font-size:14.0px;color:#727272;transform:scaleX(0.9930)">24.12.2024 10:20</span>
</div>
<div class="row">
<svg class="ic" style="left:265.1px;top:604.88px" width="17" height="13" viewBox="0 0 16.5 13" ><path d="M0 1.1Q0 0 1.1 0H5.4Q6 0 6.4 0.5L7 1.3H15.4Q16.5 1.3 16.5 2.4V4H0Z" fill="#f4b40b"/><path d="M0 3H5.6Q6.2 3 6.6 2.5L7.4 1.5H15.4Q16.5 1.5 16.5 2.6V11.9Q16.5 13 15.4 13H1.1Q0 13 0 11.9Z" fill="url(#fg)"/></svg>
<span class="t" style="left:287.29px;top:605.66px;font-size:14.2px;color:#222222;transform:scaleX(0.9513)">Ringtones</span>
<span class="t" style="left:700.30px;top:605.83px;font-size:14.0px;color:#727272;transform:scaleX(0.9930)">05.12.2024 18:02</span>
</div>
</div>
<div class="status">
<span class="t" style="left:23.48px;top:734.85px;font-size:14.0px;color:#42597e;transform:scaleX(0.9319)">Elementy: 14</span>
<i class="stsep"></i></div>
</body></html>
